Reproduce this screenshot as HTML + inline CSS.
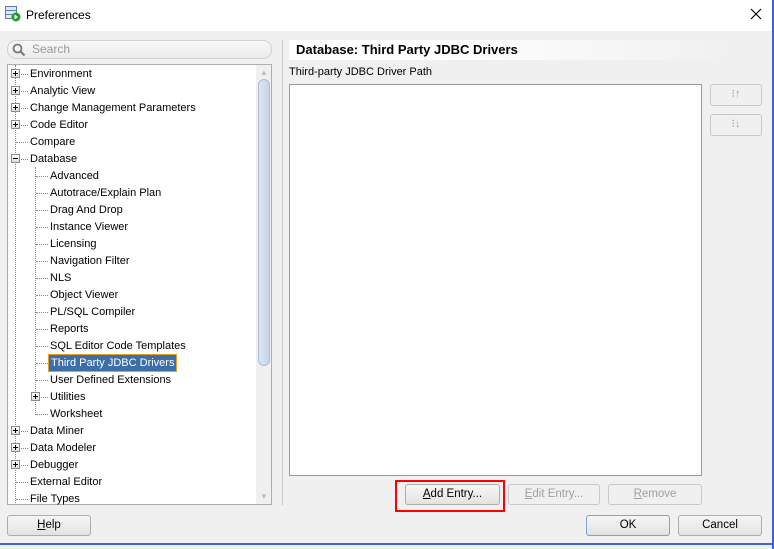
<!DOCTYPE html>
<html><head><style>
*{box-sizing:border-box;margin:0;padding:0}
body{width:774px;height:549px;background:#f0f0f0;font-family:"Liberation Sans",sans-serif;font-size:11px;color:#000;position:relative;overflow:hidden}
.a{position:absolute}
.title{left:0;top:0;width:772px;height:31px;background:#fff}
.tree{left:7px;top:64px;width:265px;height:441px;background:#fff;border:1px solid #adadad;overflow:hidden}
.r{position:absolute;height:16px;line-height:16px;white-space:nowrap}
.ex{position:absolute;width:9px;height:9px;border:1px solid #8c8c8c;background:linear-gradient(#fff,#ddd);}
.ex:before{content:"";position:absolute;left:1px;top:3px;width:5px;height:1px;background:#000}
.ex.p:after{content:"";position:absolute;left:3px;top:1px;width:1px;height:5px;background:#000}
.hd{position:absolute;height:1px;border-top:1px dotted #888}
.vd{position:absolute;width:1px;border-left:1px dotted #888}
.btn{position:absolute;border:1px solid #adadad;border-radius:3px;background:linear-gradient(#f6f6f6,#e2e2e2);text-align:center;line-height:19px;font-size:11.5px}
.dis{color:#a0a0a0;border-color:#c8c8c8;background:#f0f0f0}
</style></head><body>
<div class="a title"></div>
<svg class="a" style="left:5px;top:6px" width="16" height="16"><rect x="0.5" y="0.5" width="11" height="12" fill="#dfe8f4" stroke="#5b7fb0"/><line x1="1" y1="4.5" x2="11" y2="4.5" stroke="#5b7fb0"/><line x1="1" y1="8.5" x2="11" y2="8.5" stroke="#5b7fb0"/><circle cx="11" cy="11" r="4.5" fill="#2a9a2a"/><path d="M9.5 8.5 L13 11 L9.5 13.5Z" fill="#fff"/></svg>
<div class="a" style="left:26px;top:8px;font-size:12px">Preferences</div>
<svg class="a" style="left:750px;top:8px" width="12" height="12"><path d="M1 1L11 11M11 1L1 11" stroke="#000" stroke-width="1.2"/></svg>
<div class="a" style="left:772px;top:0;width:2px;height:549px;background:#3c63d6"></div>
<div class="a" style="left:0;top:543px;width:774px;height:2px;background:#3c63d6"></div>

<div class="a" style="left:7px;top:40px;width:265px;height:19px;border:1px solid #d0d0d0;border-radius:9px;background:linear-gradient(#f8f8f8,#ececec)"></div>
<svg class="a" style="left:12px;top:43px" width="14" height="14"><circle cx="5.5" cy="5.5" r="4" fill="none" stroke="#777" stroke-width="1.8"/><line x1="8.5" y1="8.5" x2="12.5" y2="12.5" stroke="#777" stroke-width="2"/></svg>
<div class="a" style="left:32px;top:42px;color:#999;font-size:12px">Search</div>

<div class="a tree">
<div class="vd" style="left:7px;top:0;height:440px"></div>
<div class="vd" style="left:27px;top:102px;height:248px"></div>
<div style="position:absolute;left:248px;top:0;width:16px;height:440px;background:#f0f0f0"></div>
<div style="position:absolute;left:250px;top:14px;width:12px;height:287px;border:1px solid #a9bfd6;border-radius:6px;background:linear-gradient(90deg,#dbe6f1,#c6d6e8)"></div>
<div style="position:absolute;left:252px;top:3px;color:#bbb;font-size:8px">▲</div>
<div style="position:absolute;left:252px;top:427px;color:#bbb;font-size:8px">▼</div>
</div>

<div class="a" style="left:7px;top:65px">
<div class="hd" style="left:12px;top:9px;width:9px"></div><div class="ex p" style="left:4px;top:4px"></div><div class="r" style="left:23px;top:1px">Environment</div>
<div class="hd" style="left:12px;top:26px;width:9px"></div><div class="ex p" style="left:4px;top:21px"></div><div class="r" style="left:23px;top:18px">Analytic View</div>
<div class="hd" style="left:12px;top:43px;width:9px"></div><div class="ex p" style="left:4px;top:38px"></div><div class="r" style="left:23px;top:35px">Change Management Parameters</div>
<div class="hd" style="left:12px;top:60px;width:9px"></div><div class="ex p" style="left:4px;top:55px"></div><div class="r" style="left:23px;top:52px">Code Editor</div>
<div class="hd" style="left:9px;top:77px;width:12px"></div><div class="r" style="left:23px;top:69px">Compare</div>
<div class="hd" style="left:12px;top:94px;width:9px"></div><div class="ex" style="left:4px;top:89px"></div><div class="r" style="left:23px;top:86px">Database</div>
<div class="hd" style="left:29px;top:111px;width:12px"></div><div class="r" style="left:43px;top:103px">Advanced</div>
<div class="hd" style="left:29px;top:128px;width:12px"></div><div class="r" style="left:43px;top:120px">Autotrace/Explain Plan</div>
<div class="hd" style="left:29px;top:145px;width:12px"></div><div class="r" style="left:43px;top:137px">Drag And Drop</div>
<div class="hd" style="left:29px;top:162px;width:12px"></div><div class="r" style="left:43px;top:154px">Instance Viewer</div>
<div class="hd" style="left:29px;top:179px;width:12px"></div><div class="r" style="left:43px;top:171px">Licensing</div>
<div class="hd" style="left:29px;top:196px;width:12px"></div><div class="r" style="left:43px;top:188px">Navigation Filter</div>
<div class="hd" style="left:29px;top:213px;width:12px"></div><div class="r" style="left:43px;top:205px">NLS</div>
<div class="hd" style="left:29px;top:230px;width:12px"></div><div class="r" style="left:43px;top:222px">Object Viewer</div>
<div class="hd" style="left:29px;top:247px;width:12px"></div><div class="r" style="left:43px;top:239px">PL/SQL Compiler</div>
<div class="hd" style="left:29px;top:264px;width:12px"></div><div class="r" style="left:43px;top:256px">Reports</div>
<div class="hd" style="left:29px;top:281px;width:12px"></div><div class="r" style="left:43px;top:273px">SQL Editor Code Templates</div>
<div class="hd" style="left:29px;top:298px;width:12px"></div><div class="r" style="left:41px;top:289px;height:18px;padding:0 2px;background:#3d6ea8;color:#fff;border:1px solid #e8a020;line-height:16px">Third Party JDBC Drivers</div>
<div class="hd" style="left:29px;top:315px;width:12px"></div><div class="r" style="left:43px;top:307px">User Defined Extensions</div>
<div class="hd" style="left:32px;top:332px;width:9px"></div><div class="ex p" style="left:24px;top:327px"></div><div class="r" style="left:43px;top:324px">Utilities</div>
<div class="hd" style="left:29px;top:349px;width:12px"></div><div class="r" style="left:43px;top:341px">Worksheet</div>
<div class="hd" style="left:12px;top:366px;width:9px"></div><div class="ex p" style="left:4px;top:361px"></div><div class="r" style="left:23px;top:358px">Data Miner</div>
<div class="hd" style="left:12px;top:383px;width:9px"></div><div class="ex p" style="left:4px;top:378px"></div><div class="r" style="left:23px;top:375px">Data Modeler</div>
<div class="hd" style="left:12px;top:400px;width:9px"></div><div class="ex p" style="left:4px;top:395px"></div><div class="r" style="left:23px;top:392px">Debugger</div>
<div class="hd" style="left:9px;top:417px;width:12px"></div><div class="r" style="left:23px;top:409px">External Editor</div>
<div class="hd" style="left:9px;top:434px;width:12px"></div><div class="r" style="left:23px;top:426px">File Types</div>
</div>

<div class="a" style="left:282px;top:40px;width:1px;height:465px;background:#c8c8c8"></div>
<div class="a" style="left:289px;top:40px;width:145px;height:20px;background:#fff"></div>
<div class="a" style="left:434px;top:40px;width:300px;height:20px;background:linear-gradient(90deg,#fff,#f0f0f0)"></div>
<div class="a" style="left:296px;top:42px;font-weight:bold;font-size:13px">Database: Third Party JDBC Drivers</div>
<div class="a" style="left:289px;top:66px">Third-party JDBC Driver Path</div>
<div class="a" style="left:289px;top:84px;width:413px;height:392px;background:#fff;border:1px solid #9a9a9a"></div>
<div class="btn dis" style="left:710px;top:84px;width:52px;height:22px;font-size:11px">⁝↑</div>
<div class="btn dis" style="left:710px;top:114px;width:52px;height:22px;font-size:11px">⁝↓</div>

<div class="a" style="left:395px;top:480px;width:110px;height:32px;border:2px solid #f00"></div>
<div class="btn" style="left:405px;top:484px;width:95px;height:21px"><u>A</u>dd Entry...</div>
<div class="btn dis" style="left:508px;top:484px;width:92px;height:21px"><u>E</u>dit Entry...</div>
<div class="btn dis" style="left:608px;top:484px;width:94px;height:21px"><u>R</u>emove</div>

<div class="btn" style="left:7px;top:515px;width:84px;height:21px"><u>H</u>elp</div>
<div class="btn" style="left:586px;top:515px;width:84px;height:21px;border-color:#7da2ce">OK</div>
<div class="btn" style="left:678px;top:515px;width:84px;height:21px">Cancel</div>
</body></html>
